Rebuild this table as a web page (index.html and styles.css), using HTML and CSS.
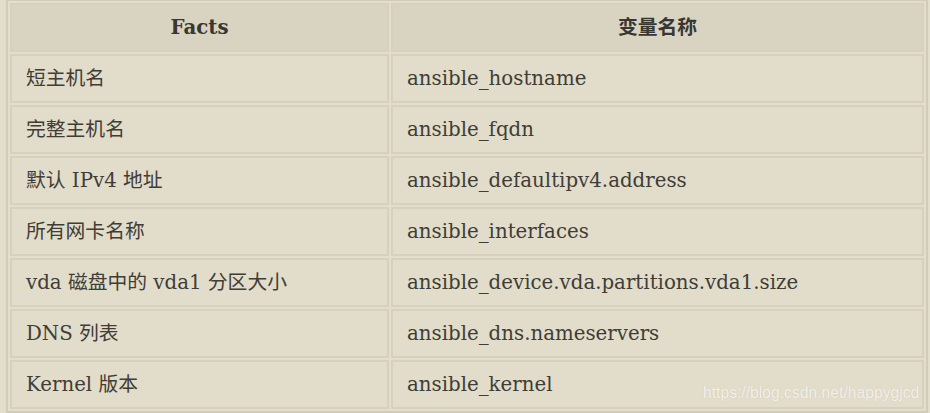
FILE: index.html
```html
<!DOCTYPE html>
<html lang="zh">
<head>
<meta charset="utf-8">
<link rel="stylesheet" href="styles.css">
</head>
<body>
<div class="wrap">
<table class="facts">
  <thead>
    <tr><th class="c1">Facts</th><th class="c2">变量名称</th></tr>
  </thead>
  <tbody>
    <tr><td>短主机名</td><td>ansible_hostname</td></tr>
    <tr><td>完整主机名</td><td>ansible_fqdn</td></tr>
    <tr><td>默认 IPv4 地址</td><td>ansible_defaultipv4.address</td></tr>
    <tr><td>所有网卡名称</td><td>ansible_interfaces</td></tr>
    <tr><td>vda 磁盘中的 vda1 分区大小</td><td>ansible_device.vda.partitions.vda1.size</td></tr>
    <tr><td>DNS 列表</td><td>ansible_dns.nameservers</td></tr>
    <tr><td>Kernel 版本</td><td>ansible_kernel</td></tr>
  </tbody>
</table>
<span class="watermark">https://blog.csdn.net/happygjcd</span>
</div>
</body>
</html>
```
FILE: styles.css
```css
html, body {
  margin: 0;
  padding: 0;
  background: #e3ddcb;
}
.wrap {
  position: relative;
  width: 930px;
  height: 413px;
  overflow: hidden;
}
.facts {
  margin: -1px 0 0 6px;
  border-collapse: separate;
  border-spacing: 2px;
  border: 2px solid #d2cbb9;
  background: #e3ddcb;
  font-family: "DejaVu Serif", "Noto Sans CJK SC", serif;
  font-size: 19.8px;
  color: #403d36;
  table-layout: fixed;
}
.facts th, .facts td {
  box-sizing: border-box;
  height: 49px;
  padding: 0 14px;
  line-height: 23px;
  border: 2px solid #d7d0be;
  text-align: left;
  white-space: nowrap;
}
.facts th {
  background: #d9d3c1;
  font-weight: bold;
  text-align: center;
  color: #3a3731;
}
.facts td {
  background: #e2dcca;
}
.facts .c1 { width: 379px; }
.facts .c2 { width: 533px; }
.watermark {
  position: absolute;
  left: 703px;
  top: 384px;
  font-family: "Liberation Sans", Arial, sans-serif;
  font-size: 15.7px;
  color: rgba(255, 255, 255, 0.75);
  text-shadow: 0 0 1px rgba(160, 150, 130, 0.4);
}
```
